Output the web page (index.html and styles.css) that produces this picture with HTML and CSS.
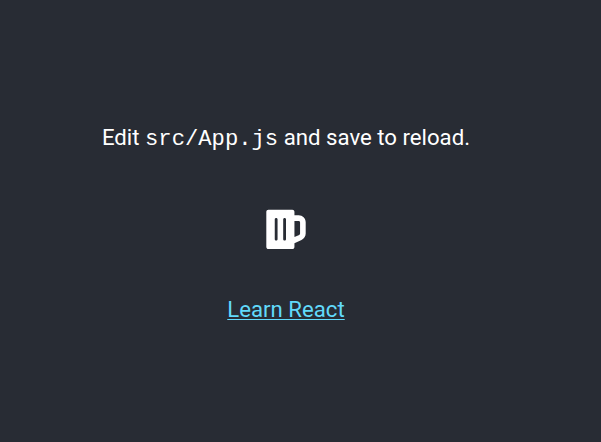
FILE: index.html
```html
<!DOCTYPE html>
<html lang="en">
<head>
<meta charset="utf-8">
<title>React App</title>
<link rel="stylesheet" href="styles.css">
</head>
<body>
<main class="app-header">
<p>Edit <code>src/App.js</code> and save to reload.</p>
<svg class="beer" viewBox="0 2 448 512" fill="currentColor" aria-hidden="true"><path d="M368 96h-48V56c0-13.255-10.745-24-24-24H24C10.745 32 0 42.745 0 56v400c0 13.255 10.745 24 24 24h272c13.255 0 24-10.745 24-24v-42.11l80.606-35.977C429.396 365.063 448 336.388 448 304.86V176c0-44.112-35.888-80-80-80zm16 208.86a16.018 16.018 0 0 1-9.479 14.611L320 343.805V160h48c8.822 0 16 7.178 16 16v128.86zM208 384c-8.836 0-16-7.164-16-16V144c0-8.836 7.164-16 16-16s16 7.164 16 16v224c0 8.836-7.164 16-16 16zm-96 0c-8.836 0-16-7.164-16-16V144c0-8.836 7.164-16 16-16s16 7.164 16 16v224c0 8.836-7.164 16-16 16z"/></svg>
<a class="app-link" href="#">Learn React</a>
</main>
</body>
</html>
```

FILE: styles.css
```css
html {
  background: #282c34;
}

body {
  margin: 0;
  font-family: Roboto, sans-serif;
}

.app-header {
  box-sizing: border-box;
  width: 572px;
  height: 442px;
  padding-top: 124px;
  display: flex;
  flex-direction: column;
  align-items: center;
  font-size: 22.2px;
  line-height: 26px;
  color: white;
}

p {
  margin: 0;
}

code {
  font-family: "Liberation Mono", monospace;
  font-size: 22.2px;
}

.beer {
  width: 40px;
  height: 45px;
  margin-top: 54px;
}

.app-link {
  margin-top: 44px;
  color: #61dafb;
  text-decoration-thickness: 1px;
  text-underline-offset: 2px;
}
```
